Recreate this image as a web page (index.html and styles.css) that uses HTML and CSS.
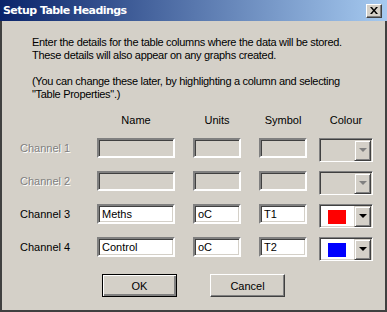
FILE: index.html
```html
<!DOCTYPE html>
<html lang="en">

<head>
  <meta charset="UTF-8">
  <title>Setup Table Headings</title>
  <link rel="stylesheet" href="styles.css">
</head>

<body>

  <section class="dialog">
    <header class="titlebar">
      <span class="title">Setup Table Headings</span>
      <div class="close">
        <svg width="8" height="7" viewBox="0 0 8 7">
          <path d="M0 0h2l2 2.5L6 0h2L5 3.5 8 7H6L4 4.5 2 7H0l3-3.5z" fill="#000" />
        </svg>
      </div>
    </header>

    <main class="content">
      <p>Enter the details for the table columns where the data will be stored.<br>
        These details will also appear on any graphs created.</p>
      <p>(You can change these later, by highlighting a column and selecting<br>
        "Table Properties".)</p>

      <div class="grid">
        <div></div>
        <div class="head name">Name</div>
        <div class="head units">Units</div>
        <div class="head symbol">Symbol</div>
        <div class="head colour">Colour</div>

        <div class="label disabled">Channel 1</div>
        <div class="field name off"></div>
        <div class="field units off"></div>
        <div class="field symbol off"></div>
        <div class="combo off">
          <span class="swatch"></span>
          <span class="drop"><i></i></span>
        </div>

        <div class="label disabled">Channel 2</div>
        <div class="field name off"></div>
        <div class="field units off"></div>
        <div class="field symbol off"></div>
        <div class="combo off">
          <span class="swatch"></span>
          <span class="drop"><i></i></span>
        </div>

        <div class="label">Channel 3</div>
        <div class="field name">Meths</div>
        <div class="field units">oC</div>
        <div class="field symbol">T1</div>
        <div class="combo">
          <span class="swatch red"></span>
          <span class="drop"><i></i></span>
        </div>

        <div class="label">Channel 4</div>
        <div class="field name">Control</div>
        <div class="field units">oC</div>
        <div class="field symbol">T2</div>
        <div class="combo">
          <span class="swatch blue"></span>
          <span class="drop"><i></i></span>
        </div>
      </div>

      <footer class="buttons">
        <button class="default">OK</button>
        <button>Cancel</button>
      </footer>
    </main>
  </section>

</body>

</html>
```

FILE: styles.css
```css
* {
  margin: 0;
  padding: 0;
  box-sizing: border-box;
  font-family: "Liberation Sans", Arial, sans-serif;

  --face: #d4d0c8;
  --shadow: #808080;
  --dark: #404040;
}

body {
  width: 387px;
  height: 312px;
  background-color: var(--face);
}

.dialog {
  width: 387px;
  height: 312px;
  display: flex;
  flex-direction: column;
  background-color: var(--face);
  border: 2px solid var(--dark);
  border-top: none;
}

.titlebar {
  height: 21px;
  margin: 0 -2px;
  display: flex;
  align-items: center;
  justify-content: space-between;
  padding: 0 5px 0 3px;
  background: linear-gradient(to right, #0a246a, #a6caf0);
}

.title {
  color: white;
  font-family: "DejaVu Sans", sans-serif;
  font-weight: bold;
  font-size: 11px;
  letter-spacing: -0.55px;
}

.close {
  width: 16px;
  height: 14px;
  display: grid;
  place-content: center;
  background-color: var(--face);
  border: 1px solid;
  border-color: white var(--dark) var(--dark) white;
  box-shadow: inset -1px -1px var(--shadow);
}

.close svg {
  display: block;
}

.content {
  flex: 1;
  padding: 15px 0 0 30px;
  font-size: 11px;
  line-height: 13px;
}

.content p {
  margin-bottom: 13px;
  letter-spacing: -0.3px;
}

.grid {
  display: grid;
  grid-template-columns: 77px 96px 66px 60px 54px;
  row-gap: 9px;
  align-items: start;
  margin-left: -12px;
}

.head {
  text-align: center;
  margin-bottom: 2px;
}

.name {
  width: 78px;
}

.units,
.symbol {
  width: 48px;
}

.colour {
  width: 54px;
}

.label {
  line-height: 20px;
  white-space: nowrap;
}

.label.disabled {
  color: var(--shadow);
  text-shadow: 1px 1px white;
}

.field {
  height: 20px;
  padding: 0 3px;
  line-height: 16px;
  background-color: white;
  border: 2px solid;
  border-color: var(--shadow) white white var(--shadow);
  box-shadow: inset 1px 1px var(--dark), inset -1px -1px var(--face);
}

.field.off,
.combo.off {
  background-color: var(--face);
}

.combo {
  width: 54px;
  height: 24px;
  display: flex;
  align-items: center;
  justify-content: space-between;
  padding: 1px 1px 1px 8px;
  background-color: white;
  border: 1px solid;
  border-color: var(--shadow) white white var(--shadow);
  box-shadow: inset 1px 1px var(--dark), inset -1px -1px var(--face);
}

.swatch {
  width: 18px;
  height: 14px;
  margin-top: 1px;
}

.swatch.red {
  background-color: #ff0000;
}

.swatch.blue {
  background-color: #0000ff;
}

.drop {
  width: 17px;
  height: 21px;
  display: grid;
  place-content: center;
  background-color: var(--face);
  border: 1px solid;
  border-color: var(--face) var(--dark) var(--dark) var(--face);
  box-shadow: inset 1px 1px white, inset -1px -1px var(--shadow);
}

.drop i {
  width: 0;
  height: 0;
  border-left: 4px solid transparent;
  border-right: 4px solid transparent;
  border-top: 4px solid black;
}

.off .drop i {
  border-top-color: var(--shadow);
}

.buttons {
  display: flex;
  justify-content: center;
  gap: 33px;
  margin: 13px 0 0 -30px;
}

button {
  width: 75px;
  height: 23px;
  font-size: 11px;
  color: black;
  background-color: var(--face);
  border: 1px solid;
  border-color: white var(--dark) var(--dark) white;
  box-shadow: inset -1px -1px var(--shadow);
}

button.default {
  border: 1px solid black;
  box-shadow: inset 1px 1px white, inset -2px -2px var(--shadow);
}
```
